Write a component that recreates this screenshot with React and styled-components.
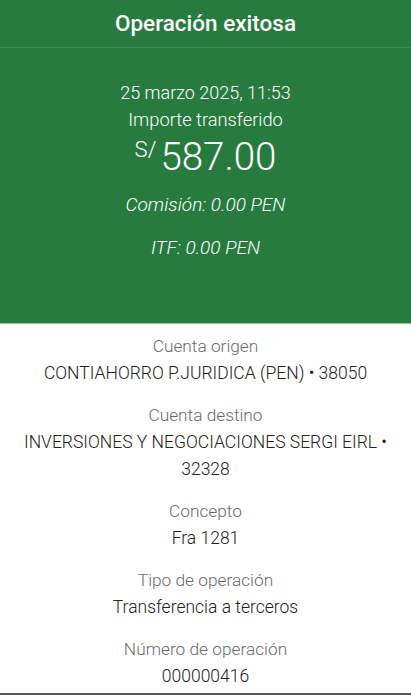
import React from 'react';
import styled, { createGlobalStyle } from 'styled-components';

const GlobalStyle = createGlobalStyle`
  body {
    margin: 0;
    background: #fff;
    font-family: Roboto, "Noto Sans", "Liberation Sans", sans-serif;
  }
`;

const Page = styled.div`
  width: 411px;
  height: 695px;
  overflow: hidden;
  display: flex;
  flex-direction: column;
  border-bottom: 2px solid #555;
  box-sizing: border-box;
`;

const Hero = styled.section`
  background: #287b3f;
  color: #fff;
  height: 324px;
  flex-shrink: 0;
  display: flex;
  flex-direction: column;
  align-items: center;
  border-bottom: 1px solid #8fc29c;
  box-sizing: border-box;
`;

const Title = styled.h1`
  margin: 0;
  width: 100%;
  height: 48px;
  display: flex;
  align-items: center;
  justify-content: center;
  font-size: 22.5px;
  font-weight: 500;
  border-bottom: 1px solid #3b8a51;
  box-sizing: border-box;
  padding-bottom: 2px;
`;

const Line = styled.div`
  font-size: ${({ size }) => size || 18}px;
  font-weight: 300;
  font-style: ${({ italic }) => (italic ? 'italic' : 'normal')};
  line-height: 26px;
  margin-top: ${({ top }) => top || 0}px;
`;

const Amount = styled.div`
  display: flex;
  align-items: flex-start;
  margin-top: 3px;
  line-height: 42px;
`;

const Currency = styled.span`
  font-size: 22px;
  font-weight: 300;
  line-height: 28px;
  margin-right: 4px;
`;

const Value = styled.span`
  font-size: 38.5px;
  font-weight: 300;
`;

const Details = styled.section`
  display: flex;
  flex-direction: column;
  align-items: center;
  gap: 15px;
  padding-top: 9px;
  text-align: center;
`;

const Field = styled.div`
  display: flex;
  flex-direction: column;
  align-items: center;
`;

const Label = styled.div`
  font-size: 17.3px;
  font-weight: 300;
  color: #6b6b6b;
  line-height: 27px;
`;

const FieldValue = styled.div`
  font-size: 17.5px;
  font-weight: 300;
  color: #222;
  line-height: 27px;
  padding: 0 20px;
`;

const fields = [
  ['Cuenta origen', 'CONTIAHORRO P.JURIDICA (PEN) • 38050'],
  ['Cuenta destino', 'INVERSIONES Y NEGOCIACIONES SERGI EIRL • 32328'],
  ['Concepto', 'Fra 1281'],
  ['Tipo de operación', 'Transferencia a terceros'],
  ['Número de operación', '000000416'],
];

export default function App() {
  return (
    <>
      <GlobalStyle />
      <Page>
        <Hero>
          <Title>Operación exitosa</Title>
          <Line top={32}>25 marzo 2025, 11:53</Line>
          <Line top={1} size={18.3}>Importe transferido</Line>
          <Amount>
            <Currency>S/</Currency>
            <Value>587.00</Value>
          </Amount>
          <Line italic size={19} top={14}>Comisión: 0.00 PEN</Line>
          <Line italic size={19} top={17}>ITF: 0.00 PEN</Line>
        </Hero>
        <Details>
          {fields.map(([label, value]) => (
            <Field key={label}>
              <Label>{label}</Label>
              <FieldValue>{value}</FieldValue>
            </Field>
          ))}
        </Details>
      </Page>
    </>
  );
}
